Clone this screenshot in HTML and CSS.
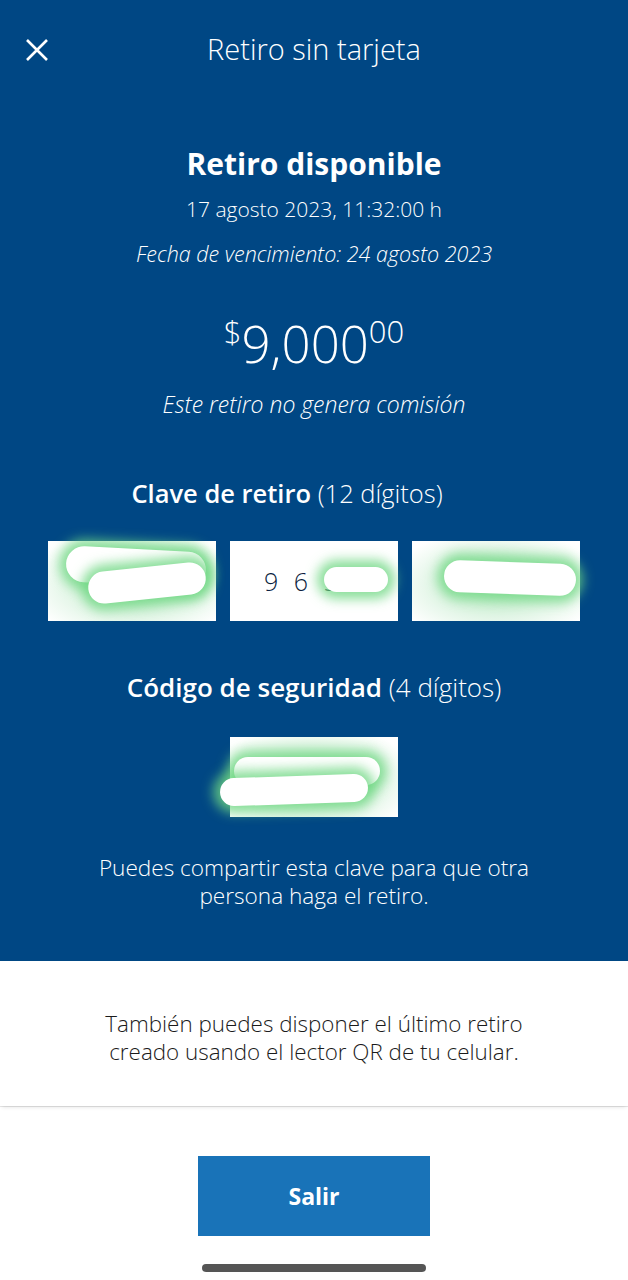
FILE: index.html
```html
<!DOCTYPE html>
<html lang="es">
<head>
<meta charset="utf-8">
<title>Retiro sin tarjeta</title>
<link rel="stylesheet" href="styles.css">
</head>
<body>
<div class="screen">
  <section class="hero">
    <header class="topbar">
      <button class="close" aria-label="Cerrar">
        <svg width="24" height="24" viewBox="0 0 24 24"><path d="M2 2 L22 22 M22 2 L2 22" stroke="#fff" stroke-width="2.6" fill="none"/></svg>
      </button>
      <h1 class="topbar-title">Retiro sin tarjeta</h1>
    </header>

    <h2 class="status">Retiro disponible</h2>
    <p class="date">17 agosto 2023, 11:32:00 h</p>
    <p class="expiry">Fecha de vencimiento: 24 agosto 2023</p>

    <p class="amount"><sup class="cur">$</sup>9,000<sup class="cents">00</sup></p>
    <p class="fee">Este retiro no genera comisión</p>

    <p class="label label-key"><strong>Clave de retiro</strong> (12 dígitos)</p>
    <div class="codes">
      <div class="code tinted">
        <span class="blot b1"></span>
        <span class="blot b2"></span>
      </div>
      <div class="code">
        <span class="digits">9 6 5</span>
        <span class="blot b3"></span>
      </div>
      <div class="code tinted">
        <span class="blot b4"></span>
      </div>
    </div>

    <p class="label label-sec"><strong>Código de seguridad</strong> (4 dígitos)</p>
    <div class="codes">
      <div class="code tinted sec">
        <span class="blot b5"></span>
        <span class="blot b6"></span>
      </div>
    </div>

    <p class="share">Puedes compartir esta clave para que otra<br>persona haga el retiro.</p>
  </section>

  <section class="info">
    <p>También puedes disponer el último retiro<br>creado usando el lector QR de tu celular.</p>
  </section>

  <footer class="footer">
    <button class="exit">Salir</button>
    <div class="home-indicator"></div>
  </footer>
</div>
</body>
</html>
```

FILE: styles.css
```css
* { box-sizing: border-box; }

html, body {
  margin: 0;
  padding: 0;
  background: #fff;
}

body {
  font-family: "Open Sans", Roboto, "Liberation Sans", Arial, sans-serif;
  width: 628px;
  height: 1280px;
  overflow: hidden;
}

.screen {
  display: flex;
  flex-direction: column;
}

p, h1, h2 { margin: 0; }

.hero {
  background: #004784;
  color: #fff;
  display: flex;
  flex-direction: column;
  align-items: center;
  text-align: center;
  padding-bottom: 51px;
}

.topbar {
  position: relative;
  width: 100%;
  height: 96px;
  display: flex;
  align-items: center;
  justify-content: center;
}

.close {
  position: absolute;
  left: 25px;
  top: 38px;
  background: none;
  border: 0;
  padding: 0;
  width: 24px;
  height: 24px;
  display: flex;
}

.topbar-title {
  font-size: 29px;
  font-weight: 300;
}

.status {
  margin-top: 50px;
  font-size: 30px;
  line-height: 36px;
  font-weight: 700;
}

.date {
  margin-top: 13px;
  font-size: 21px;
  line-height: 28px;
  font-weight: 300;
}

.expiry {
  margin-top: 17px;
  font-size: 21.5px;
  line-height: 28px;
  font-weight: 300;
  font-style: italic;
}

.amount {
  margin-top: 45px;
  font-size: 51px;
  line-height: 60px;
  font-weight: 300;
}

.amount sup {
  font-size: 31px;
  vertical-align: 20px;
  line-height: 0;
}

.fee {
  margin-top: 17px;
  font-size: 23px;
  line-height: 28px;
  font-weight: 300;
  font-style: italic;
}

.label {
  margin-top: 59px;
  font-size: 25.5px;
  line-height: 32px;
  font-weight: 300;
}

.label strong { font-weight: 600; }

.label-key { margin-right: 54px; }

.label-sec { margin-top: 50px; font-size: 26px; }

.codes {
  margin-top: 32px;
  display: flex;
  gap: 14px;
  justify-content: center;
}

.label-sec + .codes { margin-top: 34px; }

.code {
  position: relative;
  width: 168px;
  height: 80px;
  background: #fff;
  display: flex;
  align-items: center;
  padding-left: 34px;
}

.code.tinted {
  background: radial-gradient(ellipse at 50% 55%, #b6e8c0 0%, #e4f6e8 55%, #fff 90%);
}

.digits {
  color: #0d1f3f;
  font-size: 25px;
  font-weight: 300;
  letter-spacing: 4px;
  word-spacing: 1px;
}

.blot {
  position: absolute;
  background: #fff;
  border-radius: 20px;
  box-shadow: 0 0 12px 7px rgba(110, 215, 130, 0.8);
}

.b1 { left: 18px; top: 8px; width: 140px; height: 36px; transform: rotate(3deg); }
.b2 { left: 40px; top: 26px; width: 118px; height: 32px; transform: rotate(-6deg); }
.b3 { left: 94px; top: 26px; width: 64px; height: 25px; }
.b4 { left: 32px; top: 21px; width: 132px; height: 32px; transform: rotate(2deg); }
.b5 { left: 4px; top: 20px; width: 146px; height: 28px; }
.b6 { left: -10px; top: 39px; width: 148px; height: 28px; transform: rotate(-2deg); }

.share {
  margin-top: 37px;
  font-size: 22.6px;
  line-height: 28px;
  font-weight: 300;
}

.info {
  padding: 49px 0 40px;
  text-align: center;
  color: #1b1b1b;
  font-size: 22.4px;
  line-height: 28px;
  font-weight: 300;
  box-shadow: 0 3px 4px -2px rgba(0,0,0,0.12);
  position: relative;
}

.footer {
  display: flex;
  flex-direction: column;
  align-items: center;
  padding-top: 49px;
  border-top: 1px solid #e6e6e6;
}

.exit {
  width: 232px;
  height: 80px;
  background: #1973b8;
  border: 0;
  color: #fff;
  font-family: "Open Sans", Roboto, "Liberation Sans", Arial, sans-serif;
  font-size: 23px;
  font-weight: 700;
}

.home-indicator {
  margin-top: 28px;
  width: 224px;
  height: 8px;
  border-radius: 4px;
  background: #555;
}
```
